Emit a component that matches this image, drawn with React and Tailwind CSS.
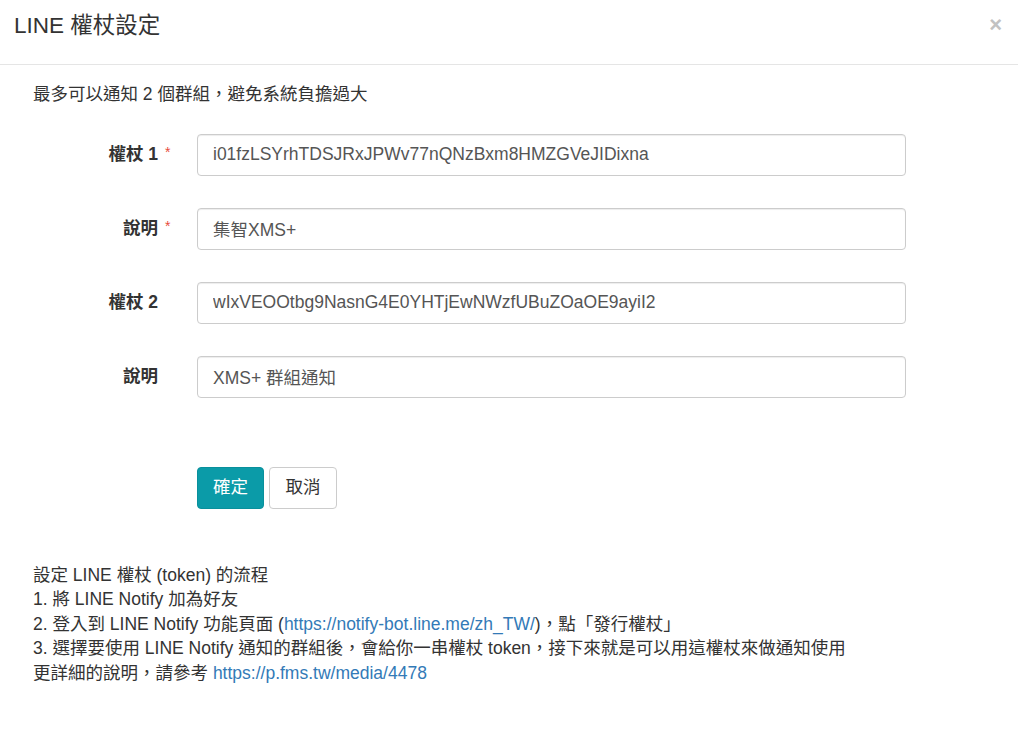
const fields = [
  { label: '權杖 1', required: true, value: 'i01fzLSYrhTDSJRxJPWv77nQNzBxm8HMZGVeJIDixna' },
  { label: '說明', required: true, value: '集智XMS+' },
  { label: '權杖 2', required: false, value: 'wIxVEOOtbg9NasnG4E0YHTjEwNWzfUBuZOaOE9ayiI2' },
  { label: '說明', required: false, value: 'XMS+ 群組通知' },
]

export default function App() {
  return (
    <div
      className="w-[1018px] h-[744px] bg-white text-[#333] text-[17.5px] leading-[24.5px]"
      style={{ fontFamily: '"Liberation Sans", "Noto Sans CJK TC", sans-serif' }}
    >
      <div className="h-[65px] border-b border-[#e5e5e5] flex items-start justify-between pl-[14px] pr-[16px] pt-[13px]">
        <h4 className="text-[22.5px] leading-[1.1] font-normal text-[#333] pt-[1px]">LINE 權杖設定</h4>
        <button className="text-[22px] leading-none font-bold text-[#c2c2c2] pt-[1px]">×</button>
      </div>

      <div className="pl-[33px] pr-[112px] pt-[17px]">
        <p>最多可以通知 2 個群組，避免系統負擔過大</p>

        <div className="mt-[27px] flex flex-col gap-[32px]">
          {fields.map((f, i) => (
            <div key={i} className="flex items-center gap-[39px]">
              <label className="relative w-[125px] text-right font-bold text-[#333]">
                {f.label}
                {f.required && (
                  <span className="absolute left-[calc(100%+7px)] top-[-2px] text-[#e74c3c] font-normal text-[14px]">*</span>
                )}
              </label>
              <input
                readOnly
                value={f.value}
                className="flex-1 h-[42px] rounded-[4px] border border-[#ccc] px-[15px] text-[#555] text-[17.5px] outline-none shadow-[inset_0_1px_1px_rgba(0,0,0,0.075)]"
              />
            </div>
          ))}
        </div>

        <div className="mt-[69px] ml-[164px] flex gap-[5px]">
          <button className="h-[42px] w-[67px] rounded-[4px] bg-[#0b9ba8] border border-[#09909c] text-white text-[17.5px]">確定</button>
          <button className="h-[42px] w-[68px] rounded-[4px] bg-white border border-[#ccc] text-[#333] text-[17.5px]">取消</button>
        </div>

        <div className="mt-[54px] text-[#333]">
          <p>設定 LINE 權杖 (token) 的流程</p>
          <p>1. 將 LINE Notify 加為好友</p>
          <p>
            2. 登入到 LINE Notify 功能頁面 (<a className="text-[#337ab7]">https://notify-bot.line.me/zh_TW/</a>)，點「發行權杖」
          </p>
          <p className="whitespace-nowrap">3. 選擇要使用 LINE Notify 通知的群組後，會給你一串權杖 token，接下來就是可以用這權杖來做通知使用</p>
          <p>
            更詳細的說明，請參考 <a className="text-[#337ab7]">https://p.fms.tw/media/4478</a>
          </p>
        </div>
      </div>
    </div>
  )
}
